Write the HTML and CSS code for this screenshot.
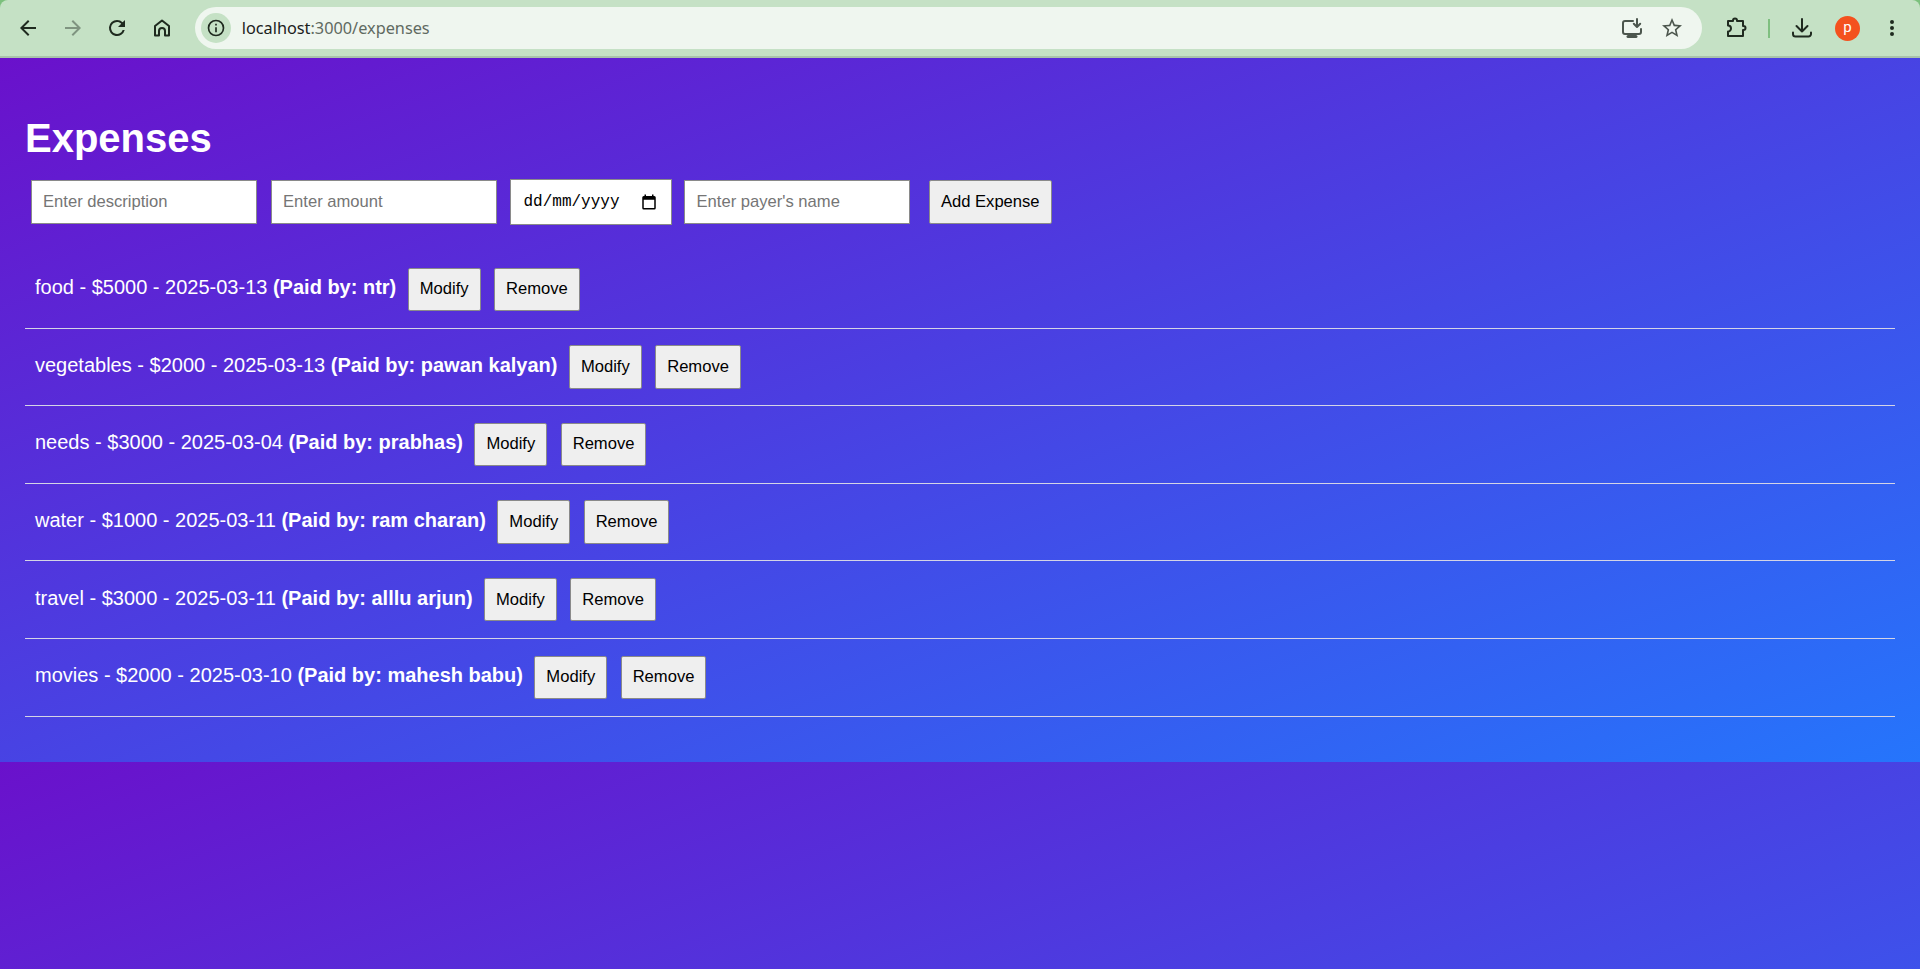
FILE: index.html
```html
<!DOCTYPE html>
<html lang="en">
<head>
<meta charset="utf-8">
<title>Expenses</title>
<link rel="stylesheet" href="styles.css">
</head>
<body>
<header class="toolbar">
  <button class="tb-btn" aria-label="Back"><svg viewBox="0 0 24 24" class="ico dark"><path d="M20 11H7.83l5.59-5.59L12 4l-8 8 8 8 1.41-1.41L7.83 13H20z"/></svg></button>
  <button class="tb-btn" aria-label="Forward"><svg viewBox="0 0 24 24" class="ico muted"><path d="M4 11h12.17l-5.59-5.59L12 4l8 8-8 8-1.41-1.41L16.17 13H4z"/></svg></button>
  <button class="tb-btn" aria-label="Reload"><svg viewBox="0 0 24 24" class="ico dark"><path d="M17.65 6.35A7.96 7.96 0 0 0 12 4a8 8 0 1 0 7.73 10h-2.08A6 6 0 1 1 12 6c1.66 0 3.14.69 4.22 1.78L13 11h7V4z"/></svg></button>
  <button class="tb-btn" aria-label="Home"><svg viewBox="0 0 24 24" class="ico line dark-line"><path d="M5 19.500V10l7-5.500 7 5.500v9.500h-4V15a3 3 0 0 0-6 0v4.500z"/></svg></button>
  <div class="omnibox">
    <span class="site-info"><svg viewBox="0 0 24 24" class="ico-info"><path d="M11 7h2v2h-2zm0 4h2v6h-2zm1-9a10 10 0 1 0 0 20 10 10 0 0 0 0-20zm0 18a8 8 0 1 1 0-16 8 8 0 0 1 0 16z"/></svg></span>
    <span class="url">localhost<span class="url-dim">:3000/expenses</span></span>
    <span class="omni-actions">
      <svg viewBox="0 0 24 24" class="ico line gray-line"><path d="M13 5H5a2 2 0 0 0-2 2v9a2 2 0 0 0 2 2h14a2 2 0 0 0 2-2v-3"/><path d="M8 20.500h8" stroke-width="3"/><path d="M17 3v7.500M13.800 7.800l3.200 3.200 3.200-3.200"/></svg>
      <svg viewBox="0 0 24 24" class="ico gray"><path d="M22 9.240l-7.190-.620L12 2 9.190 8.630 2 9.240l5.460 4.730L5.820 21 12 17.270 18.180 21l-1.630-7.030zM12 15.400l-3.760 2.270 1-4.280-3.320-2.880 4.380-.380L12 6.100l1.710 4.040 4.380.380-3.320 2.880 1 4.280z"/></svg>
    </span>
  </div>
  <div class="tb-right">
    <svg viewBox="0 0 24 24" class="ico line dark-line"><path d="M4 5h5v-.5a2 2 0 0 1 4 0V5h6v5h.5a2 2 0 0 1 0 4H19v6H4v-4.500a3 3 0 0 0 0-6z"/></svg>
    <span class="sep"></span>
    <svg viewBox="0 0 24 24" class="ico line dark-line dl"><path d="M12 3v12.500M6.500 10l5.500 5.500 5.500-5.500"/><path d="M3 16.500V18a2.500 2.500 0 0 0 2.500 2.500h13A2.500 2.500 0 0 0 21 18v-1.500"/></svg>
    <span class="avatar">p</span>
    <svg viewBox="0 0 24 24" class="ico dark menu"><path d="M12 8a2 2 0 1 0 0-4 2 2 0 0 0 0 4zm0 2a2 2 0 1 0 0 4 2 2 0 0 0 0-4zm0 6a2 2 0 1 0 0 4 2 2 0 0 0 0-4z"/></svg>
  </div>
</header>
<main class="page">
  <h1 class="title">Expenses</h1>
  <form class="expense-form">
    <input class="field" type="text" placeholder="Enter description">
    <input class="field" type="number" placeholder="Enter amount">
    <div class="field date"><span>dd/mm/yyyy</span><svg viewBox="0 0 24 24" class="cal"><path d="M19 4h-1V2h-2v2H8V2H6v2H5a2 2 0 0 0-2 2v14a2 2 0 0 0 2 2h14a2 2 0 0 0 2-2V6a2 2 0 0 0-2-2zm0 16H5V9h14z"/></svg></div>
    <input class="field" type="text" placeholder="Enter payer's name">
    <button class="btn add" type="button">Add Expense</button>
  </form>
  <ul class="list">
    <li class="row"><span class="row-text">food - $5000 - 2025-03-13 <strong>(Paid by: ntr)</strong></span><button class="btn" type="button">Modify</button><button class="btn" type="button">Remove</button></li>
    <li class="row"><span class="row-text">vegetables - $2000 - 2025-03-13 <strong>(Paid by: pawan kalyan)</strong></span><button class="btn" type="button">Modify</button><button class="btn" type="button">Remove</button></li>
    <li class="row"><span class="row-text">needs - $3000 - 2025-03-04 <strong>(Paid by: prabhas)</strong></span><button class="btn" type="button">Modify</button><button class="btn" type="button">Remove</button></li>
    <li class="row"><span class="row-text">water - $1000 - 2025-03-11 <strong>(Paid by: ram charan)</strong></span><button class="btn" type="button">Modify</button><button class="btn" type="button">Remove</button></li>
    <li class="row"><span class="row-text">travel - $3000 - 2025-03-11 <strong>(Paid by: alllu arjun)</strong></span><button class="btn" type="button">Modify</button><button class="btn" type="button">Remove</button></li>
    <li class="row"><span class="row-text">movies - $2000 - 2025-03-10 <strong>(Paid by: mahesh babu)</strong></span><button class="btn" type="button">Modify</button><button class="btn" type="button">Remove</button></li>
  </ul>
</main>
</body>
</html>
```
FILE: styles.css
```css
* { box-sizing: border-box; }
html, body { margin: 0; height: 100%; }
body {
  display: flex;
  flex-direction: column;
  height: 969px;
  overflow: hidden;
  background: #7cc07d;
  font-family: "Liberation Sans", Arial, sans-serif;
}
.toolbar {
  flex: 0 0 58px;
  display: flex;
  align-items: center;
  padding: 0 0 0 5.5px;
  background: #c5e1c5;
  border-bottom: 2px solid #a9c2ab;
  border-radius: 8px 8px 0 0;
}
.tb-btn {
  width: 44.8px;
  height: 40px;
  padding: 0;
  border: 0;
  background: none;
  display: flex;
  align-items: center;
  justify-content: center;
}
.ico { width: 24px; height: 24px; display: block; }
.dark { fill: #1f2a1f; }
.muted { fill: #7f9480; }
.gray { fill: #4c564d; }
.line { fill: none; stroke-width: 2; stroke-linejoin: round; stroke-linecap: round; }
.dark-line { stroke: #1f2a1f; }
.gray-line { stroke: #4c564d; }
.omnibox {
  flex: 1;
  height: 42px;
  margin-left: 10px;
  display: flex;
  align-items: center;
  padding: 0 18px 0 6px;
  border-radius: 21px;
  background: #eff6ef;
}
.site-info {
  width: 30px;
  height: 30px;
  border-radius: 50%;
  background: #c5e1c5;
  display: flex;
  align-items: center;
  justify-content: center;
}
.ico-info { width: 20px; height: 20px; fill: #1f2a1f; }
.url {
  margin-left: 11px;
  font-family: "Noto Sans", sans-serif;
  font-size: 16.3px;
  color: #1b211c;
}
.url-dim { color: #5f6a61; }
.omni-actions {
  margin-left: auto;
  display: flex;
  gap: 16px;
}
.tb-right {
  flex: 0 0 218px;
  display: flex;
  align-items: center;
  padding-left: 22px;
}
.sep {
  width: 2px;
  height: 19px;
  margin-left: 20px;
  background: #7fbf80;
}
.dl { margin-left: 20px; }
.avatar {
  width: 25px;
  height: 25px;
  margin-left: 21px;
  border-radius: 50%;
  background: #f4511e;
  color: #fff;
  font-family: Roboto, sans-serif;
  font-size: 15px;
  line-height: 23px;
  text-align: center;
}
.menu { margin-left: 20px; }

.page {
  flex: 1;
  padding: 56.5px 25px 0;
  color: #fff;
  background: linear-gradient(to bottom right, #6a11cb, #2575fc) 0 0 / 100% 704px repeat-y;
}
.title {
  margin: 0;
  font-size: 40px;
  line-height: 46px;
  font-weight: 700;
}
.expense-form {
  display: flex;
  align-items: center;
  margin: 18.5px 0 0 5.5px;
}
.field {
  width: 226px;
  height: 43.5px;
  margin-right: 14px;
  padding: 0 11.5px;
  border: 1px solid #8a8a8a;
  border-radius: 0;
  background: #fff;
  font-family: "Liberation Sans", Arial, sans-serif;
  font-size: 16.6px;
  color: #000;
}
.field::placeholder { color: #757575; }
.date {
  display: flex;
  align-items: center;
  justify-content: space-between;
  width: 161.5px;
  height: 46px;
  margin-left: -0.5px;
  margin-right: 12.5px;
  padding: 0 13px 0 12.5px;
  font-family: "Liberation Mono", monospace;
  font-size: 16px;
}
.cal { width: 18px; height: 18px; fill: #000; }
.btn {
  height: 43.5px;
  padding: 0 11px;
  border: 1px solid #8a8a8a;
  border-radius: 2px;
  background: #efefef;
  color: #000;
  font-family: "Liberation Sans", Arial, sans-serif;
  font-size: 16.6px;
}
.add { margin-left: 4.5px; width: 123.5px; }
.list {
  list-style: none;
  margin: 26px 0 0;
  padding: 0;
}
.row {
  display: flex;
  align-items: center;
  gap: 13.4px;
  height: 77.6px;
  padding: 0 10px;
  border-bottom: 1px solid #d4d4e6;
}
.row-text { font-size: 20px; margin-right: -2px; padding-bottom: 3px; }
```
